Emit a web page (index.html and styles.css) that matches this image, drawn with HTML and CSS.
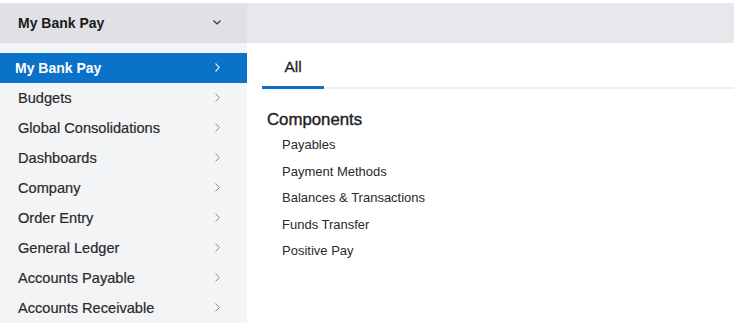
FILE: index.html
```html
<!DOCTYPE html>
<html>
<head>
  <title>My Bank Pay</title>
  <link rel="stylesheet" href="styles.css">
</head>
<body>
  <div class="app">
    <aside class="sidebar">
      <div class="sidebar-header">
        <span>My Bank Pay</span>
        <svg class="caret" width="8" height="5" viewBox="0 0 8 5"><polyline points="0.5,0.5 4,4 7.5,0.5" fill="none" stroke="#333" stroke-width="1.2"/></svg>
      </div>
      <ul class="nav">
        <li class="nav-item active"><span>My Bank Pay</span><svg class="chev" width="5" height="9" viewBox="0 0 5 9"><polyline points="0.5,0.5 4.3,4.5 0.5,8.5" fill="none" stroke="currentColor" stroke-width="1.1"/></svg></li>
        <li class="nav-item"><span>Budgets</span><svg class="chev" width="5" height="9" viewBox="0 0 5 9"><polyline points="0.5,0.5 4.3,4.5 0.5,8.5" fill="none" stroke="currentColor" stroke-width="1"/></svg></li>
        <li class="nav-item"><span>Global Consolidations</span><svg class="chev" width="5" height="9" viewBox="0 0 5 9"><polyline points="0.5,0.5 4.3,4.5 0.5,8.5" fill="none" stroke="currentColor" stroke-width="1"/></svg></li>
        <li class="nav-item"><span>Dashboards</span><svg class="chev" width="5" height="9" viewBox="0 0 5 9"><polyline points="0.5,0.5 4.3,4.5 0.5,8.5" fill="none" stroke="currentColor" stroke-width="1"/></svg></li>
        <li class="nav-item"><span>Company</span><svg class="chev" width="5" height="9" viewBox="0 0 5 9"><polyline points="0.5,0.5 4.3,4.5 0.5,8.5" fill="none" stroke="currentColor" stroke-width="1"/></svg></li>
        <li class="nav-item"><span>Order Entry</span><svg class="chev" width="5" height="9" viewBox="0 0 5 9"><polyline points="0.5,0.5 4.3,4.5 0.5,8.5" fill="none" stroke="currentColor" stroke-width="1"/></svg></li>
        <li class="nav-item"><span>General Ledger</span><svg class="chev" width="5" height="9" viewBox="0 0 5 9"><polyline points="0.5,0.5 4.3,4.5 0.5,8.5" fill="none" stroke="currentColor" stroke-width="1"/></svg></li>
        <li class="nav-item"><span>Accounts Payable</span><svg class="chev" width="5" height="9" viewBox="0 0 5 9"><polyline points="0.5,0.5 4.3,4.5 0.5,8.5" fill="none" stroke="currentColor" stroke-width="1"/></svg></li>
        <li class="nav-item"><span>Accounts Receivable</span><svg class="chev" width="5" height="9" viewBox="0 0 5 9"><polyline points="0.5,0.5 4.3,4.5 0.5,8.5" fill="none" stroke="currentColor" stroke-width="1"/></svg></li>
      </ul>
    </aside>

    <main class="main">
      <div class="main-header"></div>
      <div class="tabs">
        <div class="tab active">All</div>
      </div>
      <section class="group">
        <h3>Components</h3>
        <ul class="links">
          <li>Payables</li>
          <li>Payment Methods</li>
          <li>Balances &amp; Transactions</li>
          <li>Funds Transfer</li>
          <li>Positive Pay</li>
        </ul>
      </section>
    </main>
  </div>
</body>
</html>
```

FILE: styles.css
```css
* {
  margin: 0;
  padding: 0;
  box-sizing: border-box;
}

body {
  font-family: "Liberation Sans", Arial, sans-serif;
  background: white;
  color: #222;
  padding-top: 3px;
  height: 323px;
  overflow: hidden;
}

.app {
  display: flex;
  height: 320px;
}

.sidebar {
  width: 247px;
  background: #f3f4f6;
  display: flex;
  flex-direction: column;
}

.sidebar-header {
  height: 40px;
  background: #dfe1e4;
  display: flex;
  align-items: center;
  justify-content: space-between;
  padding: 0 27px 0 18px;
  font-size: 14px;
  font-weight: bold;
  color: #1a1a1a;
  width: 248px;
}

.caret {
  margin-top: -1px;
}

.nav {
  list-style: none;
  margin-top: 10px;
}

.nav-item {
  height: 30px;
  display: flex;
  align-items: center;
  justify-content: space-between;
  padding: 0 27px 0 18px;
  font-size: 14.6px;
  color: #2a2a2a;
  -webkit-text-stroke: 0.2px #2a2a2a;
}

.nav-item .chev {
  color: #8a8a8a;
  margin-top: -2px;
}

.nav-item.active {
  background: #0a72c8;
  color: white;
  font-weight: bold;
  font-size: 14px;
  padding-left: 15px;
  -webkit-text-stroke: 0;
}

.nav-item.active .chev {
  color: #e3eef9;
}

.main {
  flex: 1;
  display: flex;
  flex-direction: column;
}

.main-header {
  height: 40px;
  background: #e6e8eb;
}

.tabs {
  margin-left: 15px;
  height: 46px;
  border-bottom: 2px solid #eeeff1;
  display: flex;
  align-items: flex-end;
}

.tab {
  width: 62px;
  text-align: center;
  font-size: 15.5px;
  color: #1f1f1f;
  padding-bottom: 10px;
  margin-bottom: -2px;
  -webkit-text-stroke: 0.3px #1f1f1f;
}

.tab.active {
  border-bottom: 3px solid #0a72c8;
}

.group {
  padding: 21px 0 0 20px;
}

.group h3 {
  font-size: 16.8px;
  font-weight: normal;
  color: #222;
  -webkit-text-stroke: 0.4px #222;
  margin-bottom: 5px;
}

.links {
  list-style: none;
  padding-left: 15px;
}

.links li {
  font-size: 13px;
  color: #2a2a2a;
  height: 26.5px;
  line-height: 20px;
}
```
